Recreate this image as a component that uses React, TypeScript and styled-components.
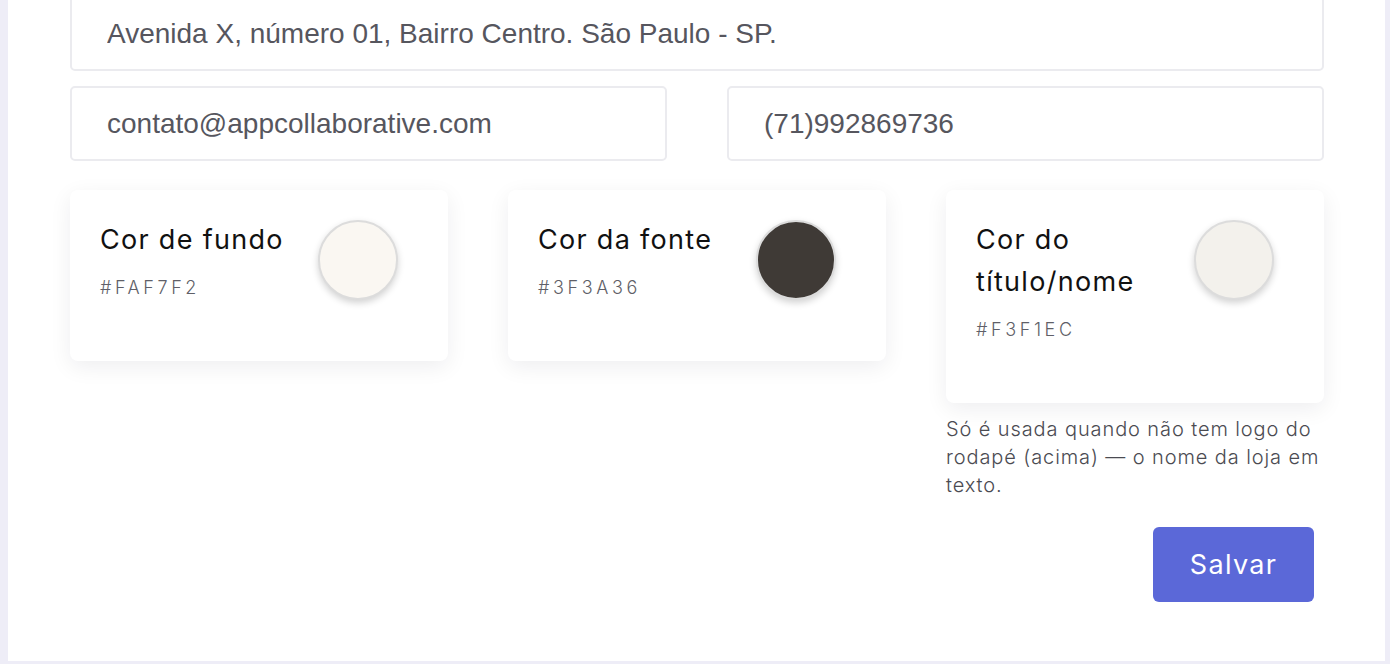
import React from 'react'
import styled, { createGlobalStyle } from 'styled-components'

const GlobalStyle = createGlobalStyle`
  html, body {
    margin: 0;
    padding: 0;
    background: #eeedf7;
    overflow: hidden;
  }
`

const colors = [
  { label: 'Cor de fundo', hex: '#FAF7F2', value: '#faf7f2' },
  { label: 'Cor da fonte', hex: '#3F3A36', value: '#3f3a36' },
  { label: 'Cor do título/nome', hex: '#F3F1EC', value: '#f3f1ec', note: 'Só é usada quando não tem logo do rodapé (acima) — o nome da loja em texto.' },
]

const App = () => {
  return (
    <>
      <GlobalStyle />
      <Page>
        <Panel>
          <Field defaultValue="Avenida X, número 01, Bairro Centro. São Paulo - SP." />
          <Row>
            <Field defaultValue="contato@appcollaborative.com" />
            <Field defaultValue="(71)992869736" />
          </Row>
          <Cards>
            {colors.map((c) => (
              <CardColumn key={c.hex}>
                <Card>
                  <CardText>
                    <CardTitle>{c.label}</CardTitle>
                    <Hex>{c.hex}</Hex>
                  </CardText>
                  <Swatch $color={c.value} />
                </Card>
                {c.note && <Note>{c.note}</Note>}
              </CardColumn>
            ))}
          </Cards>
          <Actions>
            <SaveButton>Salvar</SaveButton>
          </Actions>
        </Panel>
      </Page>
    </>
  )
}

export default App

const Page = styled.div`
  height: 661px;
  padding: 0 5px 0 8px;
  overflow: hidden;
`

const Panel = styled.div`
  background: #ffffff;
  margin-top: -4px;
  height: 665px;
  box-sizing: border-box;
  padding: 0 61px 0 62px;
  display: flex;
  flex-direction: column;
`

const Field = styled.input`
  box-sizing: border-box;
  width: 100%;
  height: 75px;
  border: 2px solid #ebebef;
  border-radius: 5px;
  padding: 0 0 0 35px;
  font-family: "Liberation Sans", Arial, sans-serif;
  font-size: 28px;
  color: #56565e;
  background: #fff;
  outline: none;
`

const Row = styled.div`
  display: grid;
  grid-template-columns: 1fr 1fr;
  gap: 60px;
  margin-top: 15px;
`

const Cards = styled.div`
  display: grid;
  grid-template-columns: repeat(3, 1fr);
  gap: 60px;
  margin-top: 29px;
  align-items: start;
`

const CardColumn = styled.div`
  display: flex;
  flex-direction: column;
`

const Card = styled.div`
  background: #fff;
  border-radius: 8px;
  box-shadow: 0 6px 22px rgba(20, 20, 40, 0.07);
  padding: 30px 50px 60px 30px;
  display: flex;
  align-items: flex-start;
  gap: 16px;
`

const CardText = styled.div`
  flex: 1;
  min-width: 0;
`

const CardTitle = styled.div`
  font-family: Inter, "Noto Sans", sans-serif;
  font-size: 27px;
  letter-spacing: 1.3px;
  line-height: 42px;
  color: #111;
  margin-top: -1px;
`

const Hex = styled.div`
  font-family: Inter, "Noto Sans", sans-serif;
  font-size: 18px;
  font-weight: 300;
  line-height: 27px;
  letter-spacing: 3.6px;
  color: #5f5f68;
  margin-top: 13px;
`

const Swatch = styled.div<{ $color: string }>`
  flex: none;
  width: 76px;
  height: 76px;
  border-radius: 50%;
  background: ${(p) => p.$color};
  border: 2px solid #dcdcdc;
  box-shadow: 0 3px 7px rgba(0, 0, 0, 0.18);
`

const Note = styled.p`
  margin: 12px 0 0;
  font-family: Inter, "Noto Sans", sans-serif;
  font-size: 20px;
  letter-spacing: 0.9px;
  line-height: 28px;
  color: #4b4b52;
  font-weight: 300;
`

const Actions = styled.div`
  display: flex;
  justify-content: flex-end;
  padding-right: 10px;
  margin-top: 28px;
`

const SaveButton = styled.button`
  width: 161px;
  height: 75px;
  border: none;
  border-radius: 6px;
  background: #5b68d8;
  color: #fff;
  font-family: Inter, "Noto Sans", sans-serif;
  font-size: 27px;
  letter-spacing: 1.3px;
  cursor: pointer;
`
